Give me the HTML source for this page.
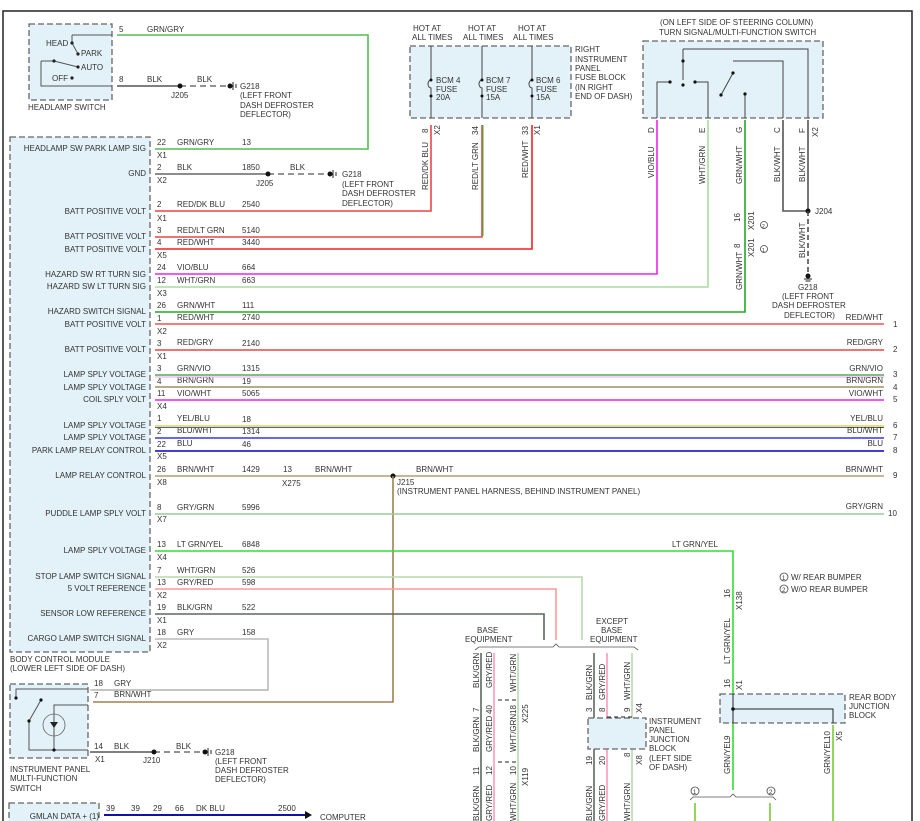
<!DOCTYPE html>
<html><head><meta charset="utf-8"><style>
html,body{margin:0;padding:0;background:#fff;width:920px;height:821px;overflow:hidden}
svg{display:block}
text{font-family:"Liberation Sans",sans-serif;font-size:8px;fill:#333}
.r{text-anchor:end}
.box{fill:#e3f1f8;stroke:#666;stroke-dasharray:6,3;stroke-width:1.3}
.w{fill:none;stroke-width:1.6}
</style></head><body>
<svg width="920" height="821" viewBox="0 0 920 821" xmlns="http://www.w3.org/2000/svg">
<path d="M3 821V11H912V821" fill="none" stroke="#222" stroke-width="1.5"/>

<rect class="box" x="29" y="24" width="83" height="76"/>
<path d="M72 35H112M72 35V43M72 43L78 54M41 61V86H112M41 61H54L78 67" fill="none" stroke="#555" stroke-width="1"/>
<circle cx="72" cy="43" r="1.6" fill="#222"/><circle cx="78" cy="54" r="1.6" fill="#222"/><circle cx="54" cy="61" r="1.6" fill="#222"/><circle cx="78" cy="67" r="1.6" fill="#222"/><circle cx="72" cy="78" r="1.6" fill="#222"/>
<text x="46" y="46">HEAD</text><text x="81" y="56">PARK</text><text x="81" y="70">AUTO</text><text x="52" y="81">OFF</text>
<text x="28" y="110">HEADLAMP SWITCH</text>
<text x="119" y="32">5</text><text x="147" y="32">GRN/GRY</text>
<path class="w" d="M117 35H368V149H155" stroke="#5b5"/>
<text x="119" y="82">8</text><text x="147" y="82">BLK</text><text x="197" y="82">BLK</text>
<path class="w" d="M117 86H180" stroke="#555"/><path d="M180 86H230" stroke="#555" stroke-width="1.3" stroke-dasharray="6,4"/>
<circle cx="180" cy="86" r="2.5" fill="#111"/><circle cx="230" cy="86" r="2.5" fill="#111"/><path d="M233 82V90M236 84V88" stroke="#222"/>
<text x="171" y="98">J205</text>
<text x="240" y="89">G218</text><text x="240" y="98">(LEFT FRONT</text><text x="240" y="108">DASH DEFROSTER</text><text x="240" y="117">DEFLECTOR)</text>

<rect class="box" x="10" y="137" width="140" height="515"/>
<text x="10" y="662">BODY CONTROL MODULE</text><text x="10" y="671">(LOWER LEFT SIDE OF DASH)</text>
<g>
<text class="r" x="146" y="151">HEADLAMP SW PARK LAMP SIG</text>
<text class="r" x="146" y="176">GND</text>
<text class="r" x="146" y="214">BATT POSITIVE VOLT</text>
<text class="r" x="146" y="239">BATT POSITIVE VOLT</text>
<text class="r" x="146" y="252">BATT POSITIVE VOLT</text>
<text class="r" x="146" y="277">HAZARD SW RT TURN SIG</text>
<text class="r" x="146" y="289">HAZARD SW LT TURN SIG</text>
<text class="r" x="146" y="314">HAZARD SWITCH SIGNAL</text>
<text class="r" x="146" y="327">BATT POSITIVE VOLT</text>
<text class="r" x="146" y="352">BATT POSITIVE VOLT</text>
<text class="r" x="146" y="377">LAMP SPLY VOLTAGE</text>
<text class="r" x="146" y="390">LAMP SPLY VOLTAGE</text>
<text class="r" x="146" y="402">COIL SPLY VOLT</text>
<text class="r" x="146" y="428">LAMP SPLY VOLTAGE</text>
<text class="r" x="146" y="440">LAMP SPLY VOLTAGE</text>
<text class="r" x="146" y="453">PARK LAMP RELAY CONTROL</text>
<text class="r" x="146" y="478">LAMP RELAY CONTROL</text>
<text class="r" x="146" y="516">PUDDLE LAMP SPLY VOLT</text>
<text class="r" x="146" y="553">LAMP SPLY VOLTAGE</text>
<text class="r" x="146" y="579">STOP LAMP SWITCH SIGNAL</text>
<text class="r" x="146" y="591">5 VOLT REFERENCE</text>
<text class="r" x="146" y="616">SENSOR LOW REFERENCE</text>
<text class="r" x="146" y="641">CARGO LAMP SWITCH SIGNAL</text>
</g>
<g>
<text x="157" y="145">22</text><text x="177" y="145">GRN/GRY</text><text x="242" y="145">13</text><text x="157" y="158">X1</text>
<text x="157" y="170">2</text><text x="177" y="170">BLK</text><text x="242" y="170">1850</text><text x="290" y="170">BLK</text><text x="157" y="183">X2</text>
<text x="157" y="207">2</text><text x="177" y="207">RED/DK BLU</text><text x="242" y="207">2540</text><text x="157" y="221">X1</text>
<text x="157" y="233">3</text><text x="177" y="233">RED/LT GRN</text><text x="242" y="233">5140</text>
<text x="157" y="245">4</text><text x="177" y="245">RED/WHT</text><text x="242" y="245">3440</text><text x="157" y="258">X5</text>
<text x="157" y="270">24</text><text x="177" y="270">VIO/BLU</text><text x="242" y="270">664</text>
<text x="157" y="283">12</text><text x="177" y="283">WHT/GRN</text><text x="242" y="283">663</text><text x="157" y="296">X3</text>
<text x="157" y="308">26</text><text x="177" y="308">GRN/WHT</text><text x="242" y="308">111</text>
<text x="157" y="321">1</text><text x="177" y="320">RED/WHT</text><text x="242" y="320">2740</text><text x="157" y="334">X2</text>
<text x="157" y="346">3</text><text x="177" y="345">RED/GRY</text><text x="242" y="346">2140</text><text x="157" y="359">X1</text>
<text x="157" y="371">3</text><text x="177" y="371">GRN/VIO</text><text x="242" y="371">1315</text>
<text x="157" y="384">4</text><text x="177" y="383">BRN/GRN</text><text x="242" y="384">19</text>
<text x="157" y="396">11</text><text x="177" y="396">VIO/WHT</text><text x="242" y="396">5065</text><text x="157" y="409">X4</text>
<text x="157" y="421">1</text><text x="177" y="421">YEL/BLU</text><text x="242" y="422">18</text>
<text x="157" y="434">2</text><text x="177" y="433">BLU/WHT</text><text x="242" y="434">1314</text>
<text x="157" y="447">22</text><text x="177" y="446">BLU</text><text x="242" y="447">46</text><text x="157" y="459">X5</text>
<text x="157" y="472">26</text><text x="177" y="472">BRN/WHT</text><text x="242" y="472">1429</text><text x="157" y="485">X8</text>
<text x="283" y="472">13</text><text x="315" y="472">BRN/WHT</text><text x="416" y="472">BRN/WHT</text><text x="282" y="486">X275</text>
<text x="397" y="485">J215</text><text x="397" y="494">(INSTRUMENT PANEL HARNESS, BEHIND INSTRUMENT PANEL)</text>
<text x="157" y="510">8</text><text x="177" y="510">GRY/GRN</text><text x="242" y="510">5996</text><text x="157" y="522">X7</text>
<text x="157" y="547">13</text><text x="177" y="547">LT GRN/YEL</text><text x="242" y="547">6848</text><text x="157" y="560">X4</text>
<text x="157" y="573">7</text><text x="177" y="573">WHT/GRN</text><text x="242" y="573">526</text>
<text x="157" y="585">13</text><text x="177" y="585">GRY/RED</text><text x="242" y="585">598</text><text x="157" y="598">X2</text>
<text x="157" y="610">19</text><text x="177" y="610">BLK/GRN</text><text x="242" y="610">522</text><text x="157" y="623">X1</text>
<text x="157" y="635">18</text><text x="177" y="635">GRY</text><text x="242" y="635">158</text><text x="157" y="648">X2</text>
</g>
<path class="w" d="M155 174H268" stroke="#666"/><path d="M268 174H330" stroke="#555" stroke-width="1.3" stroke-dasharray="6,4"/>
<circle cx="268" cy="174" r="2.5" fill="#111"/><circle cx="330" cy="174" r="2.5" fill="#111"/><path d="M333 170V178M336 172V176" stroke="#222"/>
<text x="256" y="186">J205</text><text x="342" y="177">G218</text><text x="342" y="187">(LEFT FRONT</text><text x="342" y="196">DASH DEFROSTER</text><text x="342" y="206">DEFLECTOR)</text>
<path class="w" d="M155 211H431V125" stroke="#e44"/>
<path class="w" d="M155 237H482V125" stroke="#e44"/><path d="M483 125V236" stroke="#3b3" stroke-width="1"/>
<path class="w" d="M155 249H532V125" stroke="#e22"/>
<path class="w" d="M155 274H657V120" stroke="#e2e"/>
<path class="w" d="M155 287H708V120" stroke="#a8dca0"/>
<path class="w" d="M155 312H745V120" stroke="#2a2"/>
<path class="w" d="M155 324H884" stroke="#e55"/>
<path class="w" d="M155 350H884" stroke="#e44"/>
<path class="w" d="M155 375H884" stroke="#5a5"/><path d="M155 377H884" stroke="#f9f" stroke-width="1"/>
<path class="w" d="M155 387H884" stroke="#a09060" stroke-width="2"/>
<path class="w" d="M155 400H884" stroke="#e2e"/>
<path class="w" d="M155 426H884" stroke="#dd3"/><path d="M155 427.5H884" stroke="#55c" stroke-width="1"/>
<path class="w" d="M155 438H884" stroke="#33f"/>
<path class="w" d="M155 451H884" stroke="#00c" stroke-width="2.2"/>
<path class="w" d="M155 476H884" stroke="#b0a070" stroke-width="2"/>
<circle cx="393" cy="476" r="2.5" fill="#111"/>
<path class="w" d="M393 476V702H93" stroke="#a08050"/>
<path class="w" d="M155 514H884" stroke="#9c9"/>
<path class="w" d="M155 551H733V790" stroke="#3d3"/>
<path class="w" d="M155 577H582V640" stroke="#b8d8b0"/>
<path class="w" d="M155 589H556V640" stroke="#f99"/>
<path class="w" d="M155 614H544V640" stroke="#5a6a5a"/>
<path class="w" d="M155 639H268V690H93" stroke="#bbb"/>
<g>
<text class="r" x="883" y="320">RED/WHT</text><text x="893" y="327">1</text>
<text class="r" x="883" y="345">RED/GRY</text><text x="893" y="352">2</text>
<text class="r" x="883" y="371">GRN/VIO</text><text x="893" y="377">3</text>
<text class="r" x="883" y="383">BRN/GRN</text><text x="893" y="390">4</text>
<text class="r" x="883" y="396">VIO/WHT</text><text x="893" y="402">5</text>
<text class="r" x="883" y="421">YEL/BLU</text><text x="893" y="428">6</text>
<text class="r" x="883" y="433">BLU/WHT</text><text x="893" y="440">7</text>
<text class="r" x="883" y="446">BLU</text><text x="893" y="453">8</text>
<text class="r" x="883" y="472">BRN/WHT</text><text x="893" y="478">9</text>
<text class="r" x="883" y="509">GRY/GRN</text><text x="888" y="516">10</text>
<text x="672" y="547">LT GRN/YEL</text>
</g>

<text x="413" y="31">HOT AT</text><text x="412" y="40">ALL TIMES</text>
<text x="468" y="31">HOT AT</text><text x="463" y="40">ALL TIMES</text>
<text x="518" y="31">HOT AT</text><text x="513" y="40">ALL TIMES</text>
<rect class="box" x="410" y="46" width="161" height="72"/>
<text x="575" y="52">RIGHT</text><text x="575" y="62">INSTRUMENT</text><text x="575" y="71">PANEL</text><text x="575" y="80">FUSE BLOCK</text><text x="575" y="90">(IN RIGHT</text><text x="575" y="99">END OF DASH)</text>
<g fill="none" stroke="#444" stroke-width="1">
<path d="M431 46V80a3 4 0 0 0 0 8V118"/><path d="M482 46V80a3 4 0 0 0 0 8V118"/><path d="M532 46V80a3 4 0 0 0 0 8V118"/>
</g>
<circle cx="431" cy="80" r="1.5" fill="#111"/><circle cx="431" cy="96" r="1.5" fill="#111"/>
<circle cx="482" cy="80" r="1.5" fill="#111"/><circle cx="482" cy="96" r="1.5" fill="#111"/>
<circle cx="532" cy="80" r="1.5" fill="#111"/><circle cx="532" cy="96" r="1.5" fill="#111"/>
<text x="436" y="83">BCM 4</text><text x="436" y="92">FUSE</text><text x="436" y="100">20A</text>
<text x="486" y="83">BCM 7</text><text x="486" y="92">FUSE</text><text x="486" y="100">15A</text>
<text x="536" y="83">BCM 6</text><text x="536" y="92">FUSE</text><text x="536" y="100">15A</text>
<g transform="rotate(-90)">
<text x="-133" y="428">8</text><text x="-135" y="440">X2</text><text x="-190" y="428">RED/DK BLU</text>
<text x="-135" y="478">34</text><text x="-190" y="478">RED/LT GRN</text>
<text x="-135" y="528">33</text><text x="-135" y="540">X1</text><text x="-178" y="528">RED/WHT</text>
</g>

<text x="660" y="25">(ON LEFT SIDE OF STEERING COLUMN)</text>
<text x="659" y="35">TURN SIGNAL/MULTI-FUNCTION SWITCH</text>
<rect class="box" x="643" y="41" width="180" height="77"/>
<g fill="none" stroke="#444" stroke-width="1">
<path d="M657 118V82H670M683 49H808V118M683 49V80M695 82H708V118M733 61H783V118M733 73L721 95M745 94V118"/>
</g>
<circle cx="670" cy="82" r="1.6" fill="#111"/><circle cx="683" cy="61" r="1.6" fill="#111"/><circle cx="683" cy="85" r="1.6" fill="#111"/><circle cx="695" cy="82" r="1.6" fill="#111"/><circle cx="733" cy="73" r="1.6" fill="#111"/><circle cx="721" cy="95" r="1.6" fill="#111"/><circle cx="745" cy="94" r="1.6" fill="#111"/>
<path class="w" d="M783 120V211H808V120" stroke="#555"/>
<circle cx="808" cy="211" r="2.5" fill="#111"/><path d="M808 211V272" stroke="#444" stroke-width="1.5" stroke-dasharray="5,3"/>
<circle cx="808" cy="276" r="2.5" fill="#111"/><path d="M804 279H812M805.5 281H810.5" stroke="#222"/>
<text x="815" y="214">J204</text>
<text x="798" y="290">G218</text><text x="782" y="299">(LEFT FRONT</text><text x="772" y="308">DASH DEFROSTER</text><text x="784" y="318">DEFLECTOR)</text>
<g transform="rotate(-90)">
<text x="-133" y="654">D</text><text x="-133" y="705">E</text><text x="-133" y="742">G</text><text x="-133" y="780">C</text><text x="-133" y="805">F</text><text x="-137" y="818">X2</text>
<text x="-178" y="654">VIO/BLU</text><text x="-184" y="705">WHT/GRN</text><text x="-184" y="742">GRN/WHT</text><text x="-182" y="780">BLK/WHT</text><text x="-182" y="805">BLK/WHT</text>
<text x="-222" y="740">16</text><text x="-230" y="754">X201</text>
<text x="-248" y="740">8</text><text x="-257" y="754">X201</text>
<text x="-290" y="742">GRN/WHT</text><text x="-258" y="805">BLK/WHT</text>
</g>
<circle cx="764" cy="225" r="3.5" fill="none" stroke="#444" stroke-width="0.8"/><text x="762" y="228" style="font-size:5px">2</text>
<circle cx="764" cy="249" r="3.5" fill="none" stroke="#444" stroke-width="0.8"/><text x="762" y="252" style="font-size:5px">1</text>

<circle cx="784" cy="577" r="4" fill="none" stroke="#444" stroke-width="0.8"/><text x="782" y="580" style="font-size:6px">1</text><text x="791" y="580">W/ REAR BUMPER</text>
<circle cx="784" cy="589" r="4" fill="none" stroke="#444" stroke-width="0.8"/><text x="782" y="592" style="font-size:6px">2</text><text x="791" y="592">W/O REAR BUMPER</text>

<text x="477" y="633">BASE</text><text x="465" y="642">EQUIPMENT</text>
<text x="596" y="624">EXCEPT</text><text x="601" y="633">BASE</text><text x="590" y="642">EQUIPMENT</text>
<path d="M475 650L479 647H553L556 644L559 647H634L638 650" fill="none" stroke="#555" stroke-width="0.8"/>
<path class="w" d="M481 653V821" stroke="#5a6a5a"/><path class="w" d="M494 653V821" stroke="#f9b"/><path class="w" d="M518 653V821" stroke="#b8d8b0"/>
<path class="w" d="M594 653V821" stroke="#5a6a5a"/><path class="w" d="M607 653V821" stroke="#f9b"/><path class="w" d="M632 653V821" stroke="#b8d8b0"/>
<path d="M498 700H518M498 762H518M607 717H632" stroke="#222" stroke-dasharray="4,3"/>
<rect class="box" x="588" y="718" width="58" height="31"/>
<text x="649" y="724">INSTRUMENT</text><text x="649" y="733">PANEL</text><text x="649" y="742">JUNCTION</text><text x="649" y="751">BLOCK</text><text x="649" y="761">(LEFT SIDE</text><text x="649" y="770">OF DASH)</text>
<g transform="rotate(-90)">
<text x="-688" y="479">BLK/GRN</text><text x="-688" y="492">GRY/RED</text><text x="-692" y="516">WHT/GRN</text>
<text x="-712" y="479">7</text><text x="-714" y="492">40</text><text x="-714" y="516">18</text><text x="-723" y="528">X225</text>
<text x="-752" y="479">BLK/GRN</text><text x="-752" y="492">GRY/RED</text><text x="-752" y="516">WHT/GRN</text>
<text x="-775" y="479">11</text><text x="-775" y="492">12</text><text x="-775" y="516">10</text><text x="-786" y="528">X119</text>
<text x="-821" y="479">BLK/GRN</text><text x="-821" y="492">GRY/RED</text><text x="-821" y="516">WHT/GRN</text>
<text x="-700" y="592">BLK/GRN</text><text x="-700" y="605">GRY/RED</text><text x="-700" y="630">WHT/GRN</text>
<text x="-712" y="592">3</text><text x="-712" y="605">8</text><text x="-712" y="630">9</text><text x="-713" y="642">X4</text>
<text x="-765" y="592">19</text><text x="-765" y="605">20</text><text x="-757" y="630">8</text><text x="-765" y="642">X8</text>
<text x="-821" y="592">BLK/GRN</text><text x="-821" y="605">GRY/RED</text><text x="-821" y="630">WHT/GRN</text>
<text x="-598" y="730">16</text><text x="-610" y="742">X138</text>
<text x="-664" y="730">LT GRN/YEL</text>
<text x="-688" y="730">16</text><text x="-690" y="742">X1</text>
<text x="-740" y="730">9</text><text x="-774" y="730">GRN/YEL</text>
<text x="-740" y="830">10</text><text x="-741" y="842">X5</text><text x="-774" y="830">GRN/YEL</text>
</g>
<rect class="box" x="720" y="694" width="125" height="29"/>
<path d="M733 694V723M733 709H833V723" fill="none" stroke="#222" stroke-width="1"/><circle cx="733" cy="709" r="1.8" fill="#111"/>
<text x="849" y="700">REAR BODY</text><text x="849" y="709">JUNCTION</text><text x="849" y="718">BLOCK</text>
<path class="w" d="M833 725V821" stroke="#7c3"/>
<path d="M690 800L693 797H730L733 794L736 797H773L776 800" fill="none" stroke="#555" stroke-width="0.8"/>
<path class="w" d="M695 803V821M770 803V821" stroke="#7c3"/>
<circle cx="695" cy="791" r="4" fill="none" stroke="#444" stroke-width="0.8"/><text x="693" y="794" style="font-size:6px">1</text>
<circle cx="771" cy="791" r="4" fill="none" stroke="#444" stroke-width="0.8"/><text x="769" y="794" style="font-size:6px">2</text>

<rect class="box" x="10" y="684" width="78" height="74"/>
<path d="M16 698V689H88M29 721V750H88M29 721L41 700M54 750V705H88" fill="none" stroke="#555" stroke-width="1"/>
<circle cx="16" cy="698" r="1.6" fill="#111"/><circle cx="29" cy="721" r="1.6" fill="#111"/><circle cx="41" cy="700" r="1.6" fill="#111"/><circle cx="54" cy="750" r="1.6" fill="#111"/>
<circle cx="54" cy="725" r="11" fill="none" stroke="#666" stroke-width="0.8"/><path d="M50 722H58L54 728Z" fill="#222"/>
<path d="M90 690H268" stroke="#bbb" stroke-width="1.6"/>
<text x="94" y="686">18</text><text x="114" y="686">GRY</text><text x="94" y="698">7</text><text x="114" y="697">BRN/WHT</text>
<text x="94" y="749">14</text><text x="114" y="749">BLK</text><text x="176" y="749">BLK</text><text x="95" y="762">X1</text>
<path class="w" d="M90 752H154" stroke="#555"/><path d="M154 752H205" stroke="#555" stroke-width="1.3" stroke-dasharray="6,4"/>
<circle cx="154" cy="752" r="2.5" fill="#111"/><circle cx="205" cy="752" r="2.5" fill="#111"/><path d="M208 748V756M211 750V754" stroke="#222"/>
<text x="143" y="763">J210</text>
<text x="215" y="755">G218</text><text x="215" y="764">(LEFT FRONT</text><text x="215" y="773">DASH DEFROSTER</text><text x="215" y="782">DEFLECTOR)</text>
<text x="10" y="772">INSTRUMENT PANEL</text><text x="10" y="781">MULTI-FUNCTION</text><text x="10" y="791">SWITCH</text>

<rect class="box" x="9" y="803" width="90" height="30"/>
<text class="r" x="99" y="819">GMLAN DATA + (1)</text>
<text x="106" y="811">39</text><text x="131" y="811">39</text><text x="153" y="811">29</text><text x="175" y="811">66</text><text x="196" y="811">DK BLU</text><text x="278" y="811">2500</text>
<path d="M104 815H305" stroke="#11a" stroke-width="2"/><path d="M305 811L312 815L305 819Z" fill="#111"/>
<text x="320" y="820">COMPUTER</text>
</svg>
</body></html>
